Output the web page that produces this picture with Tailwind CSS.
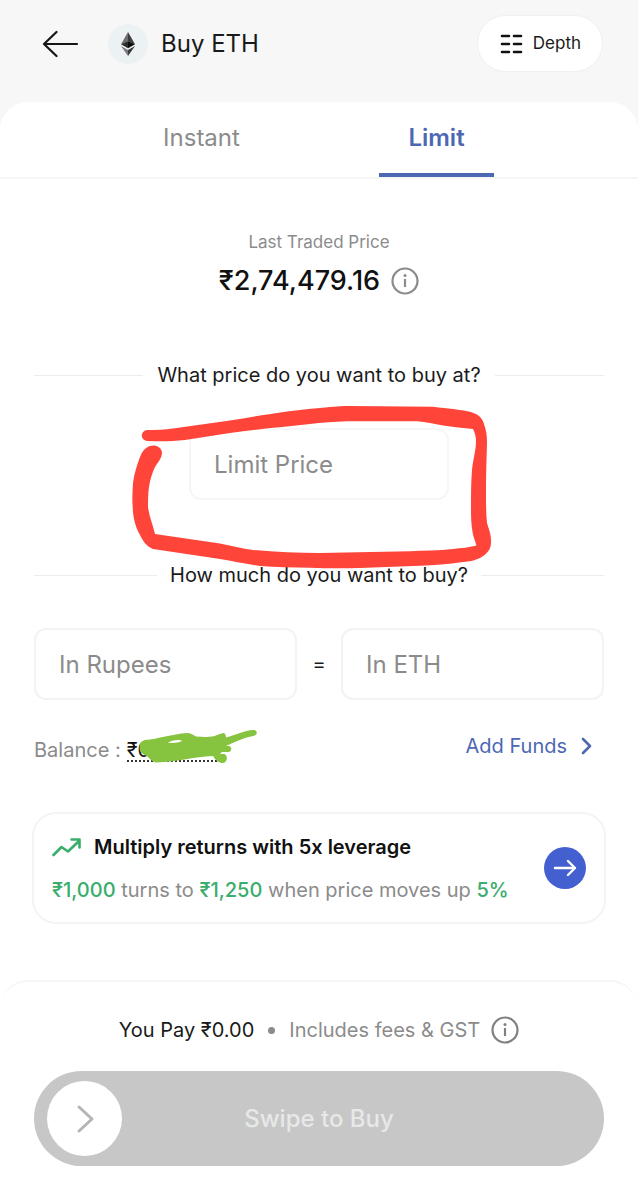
<!DOCTYPE html>
<html lang="en">
<head>
    <meta charset="UTF-8">
    <meta name="viewport" content="width=device-width, initial-scale=1.0">
    <title>Buy ETH</title>
    <script src="https://cdn.jsdelivr.net/npm/@tailwindcss/browser@4"></script>
</head>
<body class="bg-[#f7f7f7] font-['Inter',sans-serif] text-[#1a1a1a]">
    <div class="flex min-h-screen flex-col">
        <!-- Header -->
        <header class="flex h-[102px] items-center justify-between pr-[35px] pb-[15px] pl-[42px]">
            <div class="flex items-center">
                <button type="button" aria-label="Back">
                    <svg class="h-7 w-9" viewBox="0 0 36 28" fill="none" stroke="#161616" stroke-width="2.200" stroke-linecap="round" stroke-linejoin="round">
                        <path d="M35 14H2M14.500 2 2 14l12.500 12"/>
                    </svg>
                </button>
                <span class="ml-[30px] flex size-10 items-center justify-center rounded-full bg-[#ecf1f3]">
                    <svg class="h-6 w-4" viewBox="0 0 16 24">
                        <path d="M8 0 1 12.200 8 9z" fill="#6d6d6d"/>
                        <path d="M8 0v9l7 3.200z" fill="#3d3d3d"/>
                        <path d="M1 12.200 8 9v7.200z" fill="#2c2c2c"/>
                        <path d="M15 12.200 8 9v7.200z" fill="#0c0c0c"/>
                        <path d="M1 14 8 18v6z" fill="#7a7a7a"/>
                        <path d="M15 14 8 18v6z" fill="#3a3a3a"/>
                    </svg>
                </span>
                <h1 class="ml-[13px] text-2xl">Buy ETH</h1>
            </div>
            <button type="button" class="flex h-[57px] items-center gap-[10px] rounded-full border border-[#f0f0f0] bg-white px-[21px] text-[17px]">
                <svg class="size-6" viewBox="0 0 24 24" stroke="#111" stroke-width="2.600" stroke-linecap="round">
                    <path d="M3 4h7M15 4h7M3 12h7M15 12h7M3 20h7M15 20h7"/>
                </svg>
                Depth
            </button>
        </header>

        <main class="flex grow flex-col rounded-t-[28px] bg-white">
            <!-- Tabs -->
            <nav class="flex h-[77px] border-b-2 border-[#f6f6f6] px-21 text-2xl">
                <div class="flex flex-1 justify-center">
                    <button type="button" class="border-b-4 border-transparent px-6 text-[#8b8b8b]">Instant</button>
                </div>
                <div class="flex flex-1 justify-center">
                    <button type="button" class="w-[115px] border-b-4 border-[#4d68b2] font-semibold text-[#4d68b2]">Limit</button>
                </div>
            </nav>

            <section class="mt-[51px] flex flex-col items-center">
                <p class="text-[17px] leading-6 text-[#8b8b8b]">Last Traded Price</p>
                <div class="mt-[9px] flex items-center gap-[11px]">
                    <span class="text-[27px] leading-9 font-medium text-[#111]">₹2,74,479.16</span>
                    <button type="button" aria-label="About last traded price">
                        <svg class="size-7" viewBox="0 0 28 28" fill="none" stroke="#8b8b8b" stroke-width="2.200">
                            <circle cx="14" cy="14" r="12.500"/>
                            <path d="M14 12v8"/>
                            <circle cx="14" cy="8.500" r="1.500" fill="#8b8b8b" stroke="none"/>
                        </svg>
                    </button>
                </div>
            </section>

            <form class="mt-[62px] px-[34px]">
                <div class="relative">
                    <div class="flex items-center gap-[14px]">
                        <span class="h-px flex-1 bg-[#ececec]"></span>
                        <label for="limitPrice" class="text-xl leading-7">What price do you want to buy at?</label>
                        <span class="h-px flex-1 bg-[#ececec]"></span>
                    </div>
                    <input type="text" id="limitPrice" placeholder="Limit Price"
                           class="mx-auto mt-[39px] block h-[72px] w-[260px] rounded-xl border-2 border-[#f6f6f6] px-[23px] text-2xl placeholder:text-[#8b8b8b] focus:outline-none">
                    <!-- Red marker loop around the limit price -->
                    <svg class="pointer-events-none absolute top-[29px] left-1/2 z-10 h-[200px] w-[400px] -translate-x-1/2" viewBox="119 390 400 200" fill="#ff4539">
                        <path d="M147 430C156 430 165 429.500 173 428.500L230 420.500C258 416 285 411 320 408C335 406.500 342 406 350 406L433 406.700C448 408.500 460 409.500 470 411.700C478 414 482 417 484 424C486.500 431 487 436 487 443C486.500 460 486 475 486 490C486 503 486 513 487 523C489 530 491 534 491 540C491.500 548 489 553 480 558C473 561 470 561.500 463 562C448 564 434 565.500 420 565.700L360 568C343 568.500 326 568.500 310 567.700C293 567.500 276 567.500 260 566C246 564 233 561 220 559L153 549C146 546 143 541 140 535C135 526 133 517 132.700 507C132 499 132.500 491 133 483C134 474 137 465 140 457C142 452 144 449 147 447.500C152 444 161 445 162 452.500C162 458 158 462 155 467C152 473 150 480 149 487C148 494 148 500 148 507C149 516 153 525 155 534L220 543.500C231 545.500 242 548.500 253 550C275 552 298 553 320 553L410 551.200C424 550.500 439 550.500 453 549C461 548 469 547.500 476.500 545.500C475 541 473.500 537 472.700 533C471 524 471 515 471 507C471 494 471 482 472 470C473 460 476 450 476 441C476 437 475 433 473 429C463 428 453 427 443 425.500C434 424 426 422 417 421.300H347C334 421.700 322 422.500 310 424C284 427 257 429 230 433L185 440C172 441.500 160 441.500 147 441C140 440 140 431 147 430Z"/>
                    </svg>
                </div>

                <div class="mt-[61px] flex items-center gap-[13px]">
                    <span class="h-px flex-1 bg-[#ececec]"></span>
                    <h2 class="text-xl leading-7">How much do you want to buy?</h2>
                    <span class="h-px flex-1 bg-[#ececec]"></span>
                </div>
                <div class="mt-[39px] flex items-center">
                    <input type="text" aria-label="In Rupees" placeholder="In Rupees"
                           class="h-[72px] min-w-0 flex-1 rounded-xl border-2 border-[#f3f3f3] px-[23px] text-2xl placeholder:text-[#8b8b8b] focus:outline-none">
                    <span class="w-11 text-center text-xl">=</span>
                    <input type="text" aria-label="In ETH" placeholder="In ETH"
                           class="h-[72px] min-w-0 flex-1 rounded-xl border-2 border-[#f3f3f3] px-[23px] text-2xl placeholder:text-[#8b8b8b] focus:outline-none">
                </div>
            </form>

            <!-- Balance -->
            <div class="mt-8 flex items-start justify-between pr-[45px] pl-[34px] text-xl leading-7">
                <p class="mt-1 flex text-[#8b8b8b]">
                    Balance :
                    <span class="relative ml-[6px] block h-[26px] w-[94px] border-b-2 border-dotted border-[#333] text-[#111]">
                        ₹0
                        <svg class="pointer-events-none absolute -top-2 left-2 h-9 w-[126px]" viewBox="135 728 126 36" fill="#86c440">
                            <path fill-rule="evenodd" d="M145 740C158 739 172 734 187 733C191 733 193 735 196 736.500C205 737 212 737.500 217 735L223 733C225 733 226 735 226 737.500C236 735 244 730.500 253 730C258 730 258 735 253 736C243 738 235 742 226 746H229C232 747 232 751 229 752H222L220 754H224C228 755 228 762 223 763C219 763 216 761 213 756C194 757 175 762 157 762.500C152 762 150 759 147 756C142 754 138 751 140 745C140 742 142 741 145 740ZM168 743C173 743 178 743 182 741C180 739 171 740 168 743Z"/>
                        </svg>
                    </span>
                </p>
                <a href="#" class="flex items-center gap-3 text-[#4d68b2]">
                    Add Funds
                    <svg class="h-5 w-[14px]" viewBox="0 0 14 20" fill="none" stroke="currentColor" stroke-width="2.600" stroke-linecap="round" stroke-linejoin="round">
                        <path d="M4 3l7 7-7 7"/>
                    </svg>
                </a>
            </div>

            <!-- Leverage promo -->
            <section class="mx-8 mt-[48px] flex h-[112px] items-center justify-between rounded-3xl border-2 border-[#f4f4f4] px-[18px]">
                <div>
                    <h2 class="flex items-center gap-3 text-xl leading-7 font-semibold text-[#111]">
                        <svg class="h-5 w-[30px]" viewBox="0 0 30 20" fill="none" stroke="#39ad6b" stroke-width="2.600" stroke-linejoin="round" stroke-linecap="round">
                            <path d="M1.500 18 9.500 10l6.500 4.500L27 4M19.500 2.500h8v8"/>
                        </svg>
                        Multiply returns with 5x leverage
                    </h2>
                    <p class="mt-[15px] text-xl leading-7 text-[#8b8b8b]"><span class="font-medium text-[#39ad6b]">₹1,000</span> turns to <span class="font-medium text-[#39ad6b]">₹1,250</span> when price moves up <span class="font-medium text-[#39ad6b]">5%</span></p>
                </div>
                <button type="button" aria-label="Try leverage" class="flex size-[42px] shrink-0 items-center justify-center rounded-full bg-[#435fd0]">
                    <svg class="size-6" viewBox="0 0 24 24" fill="none" stroke="#fff" stroke-width="2.400" stroke-linecap="round" stroke-linejoin="round">
                        <path d="M2 12h20M15 5l7 7-7 7"/>
                    </svg>
                </button>
            </section>

            <!-- Payment sheet -->
            <footer class="mt-[56px] grow rounded-t-[28px] border-t-2 border-[#f6f6f6] px-[34px] pt-[34px] pb-[34px]">
                <div class="flex items-center justify-center text-xl leading-7">
                    <span>You Pay ₹0.00</span>
                    <span class="mx-[14px] size-[7px] rounded-full bg-[#8b8b8b]"></span>
                    <span class="text-[#8b8b8b]">Includes fees &amp; GST</span>
                    <button type="button" aria-label="About fees" class="ml-[11px]">
                        <svg class="size-7" viewBox="0 0 28 28" fill="none" stroke="#808080" stroke-width="2.200">
                            <circle cx="14" cy="14" r="12.500"/>
                            <path d="M14 12v8"/>
                            <circle cx="14" cy="8.500" r="1.500" fill="#808080" stroke="none"/>
                        </svg>
                    </button>
                </div>
                <button type="button" class="mt-[27px] flex h-[95px] w-full items-center rounded-full bg-[#c7c7c7] px-[13px] text-2xl font-medium text-[#e6e9e8]">
                    <span class="flex size-[75px] items-center justify-center rounded-full bg-white">
                        <svg class="h-8 w-5" viewBox="0 0 20 32" fill="none" stroke="#b4b4b4" stroke-width="3" stroke-linecap="round" stroke-linejoin="round">
                            <path d="M4 4l13 12L4 28"/>
                        </svg>
                    </span>
                    <span class="flex-1 pr-[75px] text-center">Swipe to Buy</span>
                </button>
            </footer>
        </main>
    </div>
</body>
</html>
